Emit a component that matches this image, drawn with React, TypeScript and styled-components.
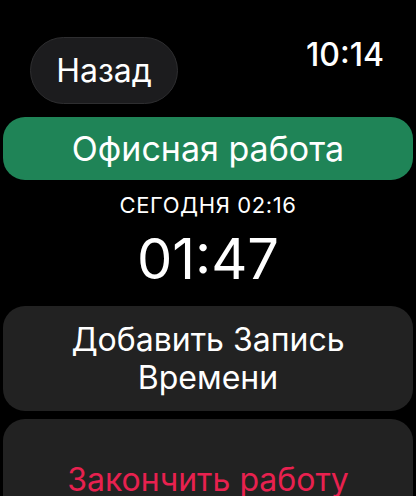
import React from 'react';
import styled, { createGlobalStyle } from 'styled-components';

const GlobalStyle = createGlobalStyle`
  html, body {
    margin: 0;
    padding: 0;
    background: #000;
    height: 100%;
    overflow: hidden;
  }
  body {
    font-family: 'Inter', 'Noto Sans', sans-serif;
    color: #fff;
  }
`;

const Screen = styled.div`
  width: 416px;
  height: 496px;
  background: #000;
  display: flex;
  flex-direction: column;
  padding: 0 3px;
  box-sizing: border-box;
  overflow: hidden;

  & > * {
    flex-shrink: 0;
  }
`;

const TopBar = styled.div`
  display: flex;
  justify-content: space-between;
  align-items: flex-start;
  padding: 37px 29px 0 27px;
  height: 67px;
`;

const BackButton = styled.button`
  width: 148px;
  height: 67px;
  border-radius: 34px;
  background: #1c1c1e;
  border: 1px solid #2e2e30;
  color: #fff;
  font-family: inherit;
  font-size: 32px;
  font-weight: 400;
  padding: 0;
  display: flex;
  align-items: center;
  justify-content: center;
`;

const Clock = styled.div`
  font-size: 32px;
  font-weight: 500;
  line-height: 1;
  margin-top: 2px;
`;

const ProjectBanner = styled.div`
  margin-top: 13px;
  height: 63px;
  border-radius: 22px;
  background: #1f8457;
  display: flex;
  align-items: center;
  justify-content: center;
  font-size: 34px;
  color: #fff;
`;

const StartedAt = styled.div`
  margin-top: 12px;
  text-align: center;
  font-size: 22px;
  letter-spacing: 0.6px;
  line-height: 26px;
`;

const Elapsed = styled.div`
  margin-top: 11px;
  text-align: center;
  font-size: 56px;
  line-height: 60px;
  font-weight: 400;
`;

const ActionCard = styled.button<{ $danger?: boolean }>`
  margin-top: ${({ $danger }) => ($danger ? '8px' : '17px')};
  min-height: 105px;
  border: none;
  border-radius: 22px;
  background: #222222;
  color: ${({ $danger }) => ($danger ? '#e8214f' : '#fff')};
  font-family: inherit;
  font-size: 32px;
  line-height: 38px;
  padding: ${({ $danger }) => ($danger ? '30px 40px 14px' : '14px 40px')};
  text-align: center;
`;

export default function App() {
  return (
    <>
      <GlobalStyle />
      <Screen>
        <TopBar>
          <BackButton>Назад</BackButton>
          <Clock>10:14</Clock>
        </TopBar>
        <ProjectBanner>Офисная работа</ProjectBanner>
        <StartedAt>СЕГОДНЯ 02:16</StartedAt>
        <Elapsed>01:47</Elapsed>
        <ActionCard>Добавить Запись Времени</ActionCard>
        <ActionCard $danger>Закончить работу</ActionCard>
      </Screen>
    </>
  );
}
